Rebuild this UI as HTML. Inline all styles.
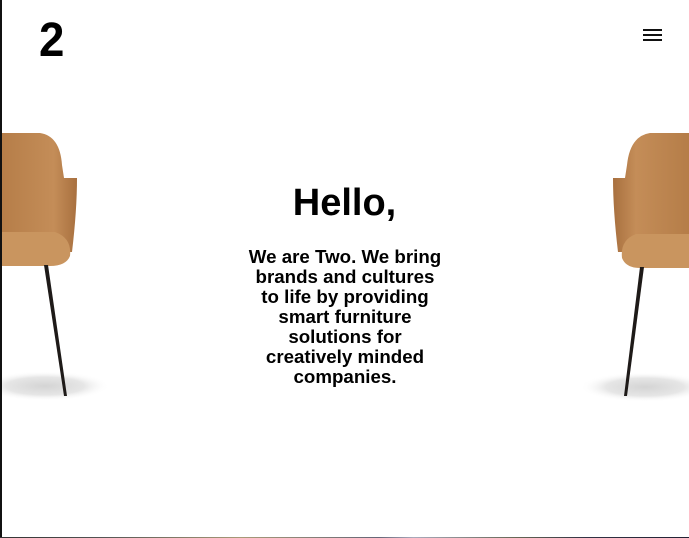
<!DOCTYPE html>
<html><head><style>
html,body{margin:0;padding:0;background:#fff;}
body{width:689px;height:538px;position:relative;overflow:hidden;font-family:"Liberation Sans",sans-serif;}
.lb{position:absolute;left:0;top:0;width:2px;height:538px;background:#111;}
.bb{position:absolute;left:0;bottom:0;width:689px;height:1px;background:linear-gradient(90deg,#333,#555 15%,#a89a78 35%,#667 55%,#aab 60%,#665 75%,#334 85%,#223);}
.logo{position:absolute;left:39px;top:14px;font-size:48px;font-weight:bold;line-height:54px;transform:scaleX(0.95);transform-origin:left;}
.menu{position:absolute;left:643px;top:29px;width:19px;}
.menu div{height:2px;background:#111;margin-bottom:3px;}
h1{position:absolute;left:0;width:689px;top:180px;margin:0;text-align:center;font-size:38px;line-height:46px;font-weight:bold;}
p{position:absolute;left:194px;width:302px;top:247px;margin:0;text-align:center;font-size:18px;line-height:20px;font-weight:bold;transform:scaleX(1.04);}
</style></head><body>
<svg width="689" height="538" style="position:absolute;left:0;top:0">
<defs>
<radialGradient id="sh"><stop offset="0" stop-color="#d4d4d4"/><stop offset="0.6" stop-color="#e6e6e6"/><stop offset="1" stop-color="#fff" stop-opacity="0"/></radialGradient>
<linearGradient id="bk" x1="0" x2="1"><stop offset="0" stop-color="#b57d48"/><stop offset="0.7" stop-color="#c48d58"/><stop offset="1" stop-color="#a8703f"/></linearGradient>
<linearGradient id="bk2" x1="1" x2="0"><stop offset="0" stop-color="#b57d48"/><stop offset="0.7" stop-color="#c48d58"/><stop offset="1" stop-color="#a8703f"/></linearGradient>
</defs>
<ellipse cx="45" cy="386" rx="65" ry="15" fill="url(#sh)"/>
<ellipse cx="645" cy="387" rx="65" ry="15" fill="url(#sh)"/>
<path d="M0 133 L40 133 Q60 136 62 165 L64 178 Q70 178 77 178 Q77 210 72 252 L0 252 Z" fill="url(#bk)"/>
<path d="M0 232 L55 232 Q72 238 70 256 Q66 266 50 266 L0 266 Z" fill="#c9955f"/>
<path d="M44 265 L48 265 L67 396 L64 396 Z" fill="#1e1a18"/>
<path d="M689 133 L650 133 Q630 136 627 165 L625 178 Q619 178 613 178 Q613 210 618 252 L689 252 Z" fill="url(#bk2)"/>
<path d="M689 234 L636 234 Q620 240 622 258 Q626 268 640 268 L689 268 Z" fill="#c9955f"/>
<path d="M640 267 L644 267 L627 396 L624 396 Z" fill="#1e1a18"/>
</svg>
<div class="lb"></div><div class="bb"></div>
<div class="logo">2</div>
<div class="menu"><div></div><div></div><div></div></div>
<h1>Hello,</h1>
<p>We are Two. We bring<br>brands and cultures<br>to life by providing<br>smart furniture<br>solutions for<br>creatively minded<br>companies.</p>
</body></html>
